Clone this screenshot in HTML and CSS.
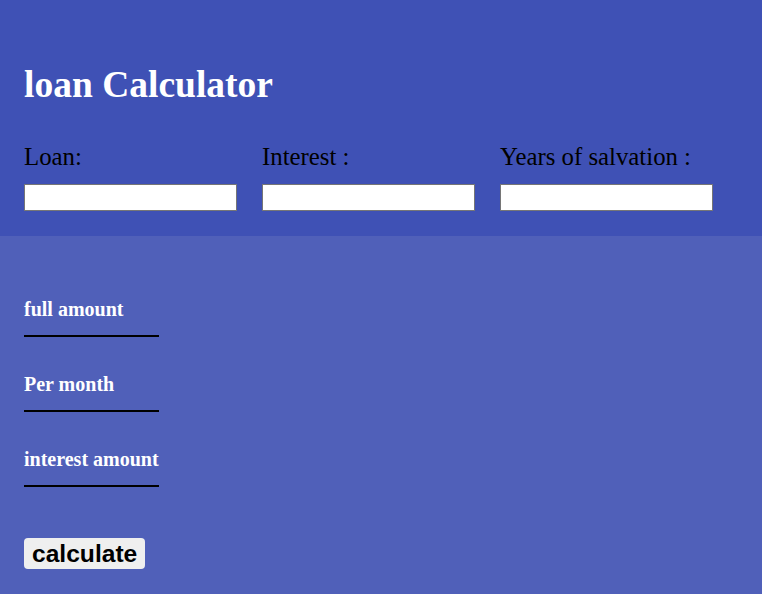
FILE: index.html
```html
<!DOCTYPE html>
<html>
<head>
<meta charset="utf-8">
<link rel="stylesheet" href="styles.css">
</head>
<body>
<header class="top">
  <h1 class="title">loan Calculator</h1>
  <div class="fields">
    <div class="field">
      <label class="field-label">Loan:</label>
      <input class="field-input" type="text">
    </div>
    <div class="field">
      <label class="field-label">Interest :</label>
      <input class="field-input" type="text">
    </div>
    <div class="field">
      <label class="field-label">Years of salvation :</label>
      <input class="field-input" type="text">
    </div>
  </div>
</header>
<main class="bottom">
  <div class="results">
    <div class="result">full amount</div>
    <div class="result">Per month</div>
    <div class="result">interest amount</div>
  </div>
  <button class="calc-btn">calculate</button>
</main>
</body>
</html>
```
FILE: styles.css
```css
html, body {
  margin: 0;
  padding: 0;
  background: #ffffff;
  font-family: "Liberation Serif", "Times New Roman", serif;
}
.top {
  background: #3f51b5;
  padding: 64px 24px 25px;
}
.title {
  margin: 0 0 37px;
  font-size: 37.5px;
  line-height: 42px;
  font-weight: bold;
  color: #ffffff;
}
.fields {
  display: flex;
  gap: 25px;
}
.field {
  display: flex;
  flex-direction: column;
  width: 213px;
}
.field-label {
  font-size: 24.8px;
  line-height: 28px;
  color: #000000;
  margin-bottom: 13px;
  white-space: nowrap;
}
.field-input {
  box-sizing: border-box;
  width: 213px;
  height: 27px;
  margin: 0;
  padding: 0 2px;
  border: 1px solid #767676;
  background: #ffffff;
}
.bottom {
  background: #5060b9;
  padding: 62px 24px 25px;
}
.results {
  display: flex;
  flex-direction: column;
  width: max-content;
}
.result {
  font-size: 20px;
  line-height: 23px;
  font-weight: bold;
  color: #ffffff;
  padding-bottom: 14px;
  border-bottom: 2px solid #000000;
  margin-bottom: 36px;
}
.result:last-child {
  margin-bottom: 0;
}
.calc-btn {
  display: block;
  margin-top: 51px;
  font-family: "Liberation Sans", Arial, sans-serif;
  font-size: 24.6px;
  font-weight: bold;
  line-height: 28px;
  padding: 2px 8px 1px;
  background: #efefef;
  color: #000000;
  border: none;
  border-radius: 4px;
}
```
